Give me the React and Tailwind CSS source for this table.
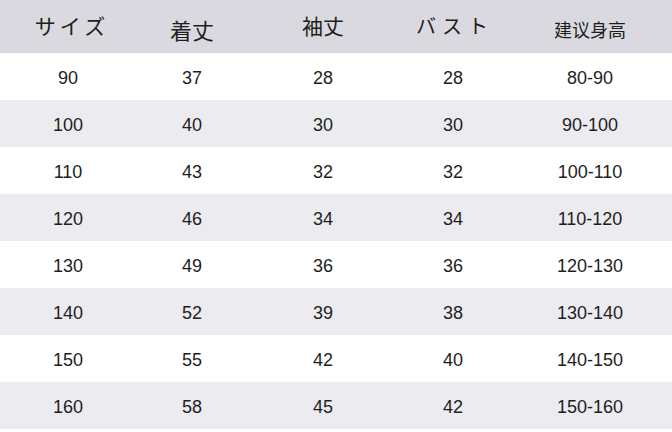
export default function App() {
  const rows = [
    ["90", "37", "28", "28", "80-90"],
    ["100", "40", "30", "30", "90-100"],
    ["110", "43", "32", "32", "100-110"],
    ["120", "46", "34", "34", "110-120"],
    ["130", "49", "36", "36", "120-130"],
    ["140", "52", "39", "38", "130-140"],
    ["150", "55", "42", "40", "140-150"],
    ["160", "58", "45", "42", "150-160"],
  ];
  const cols = "grid grid-cols-[136px_112px_150px_110px_164px]";
  return (
    <div className="w-[672px] h-[432px] bg-white overflow-hidden text-[#1e1e1e]">
      <div className={`${cols} h-[53px] bg-[#d9d9df] items-center`}>
        <div className="text-center text-[21px] tracking-[4px] pl-[8px] pb-[2px] font-['Noto_Sans_CJK_JP',sans-serif]">サイズ</div>
        <div className="text-center text-[22px] pt-[6px] font-['Noto_Sans_CJK_JP',sans-serif]">着丈</div>
        <div className="text-center text-[21px] pb-[2px] font-['Noto_Sans_CJK_JP',sans-serif]">袖丈</div>
        <div className="text-center text-[20px] tracking-[6px] pl-[4px] pb-[2px] font-['Noto_Sans_CJK_JP',sans-serif]">バスト</div>
        <div className="text-center text-[18px] pt-[6px] font-['Noto_Sans_CJK_SC',sans-serif]">建议身高</div>
      </div>
      {rows.map((r, i) => (
        <div
          key={i}
          className={`${cols} h-[47px] items-center ${i % 2 === 1 ? "bg-[#ebebf0]" : "bg-white"}`}
        >
          {r.map((c, j) => (
            <div key={j} className="text-center text-[18px] pt-[4px] font-['Liberation_Sans',Arial,sans-serif]">
              {c}
            </div>
          ))}
        </div>
      ))}
    </div>
  );
}
